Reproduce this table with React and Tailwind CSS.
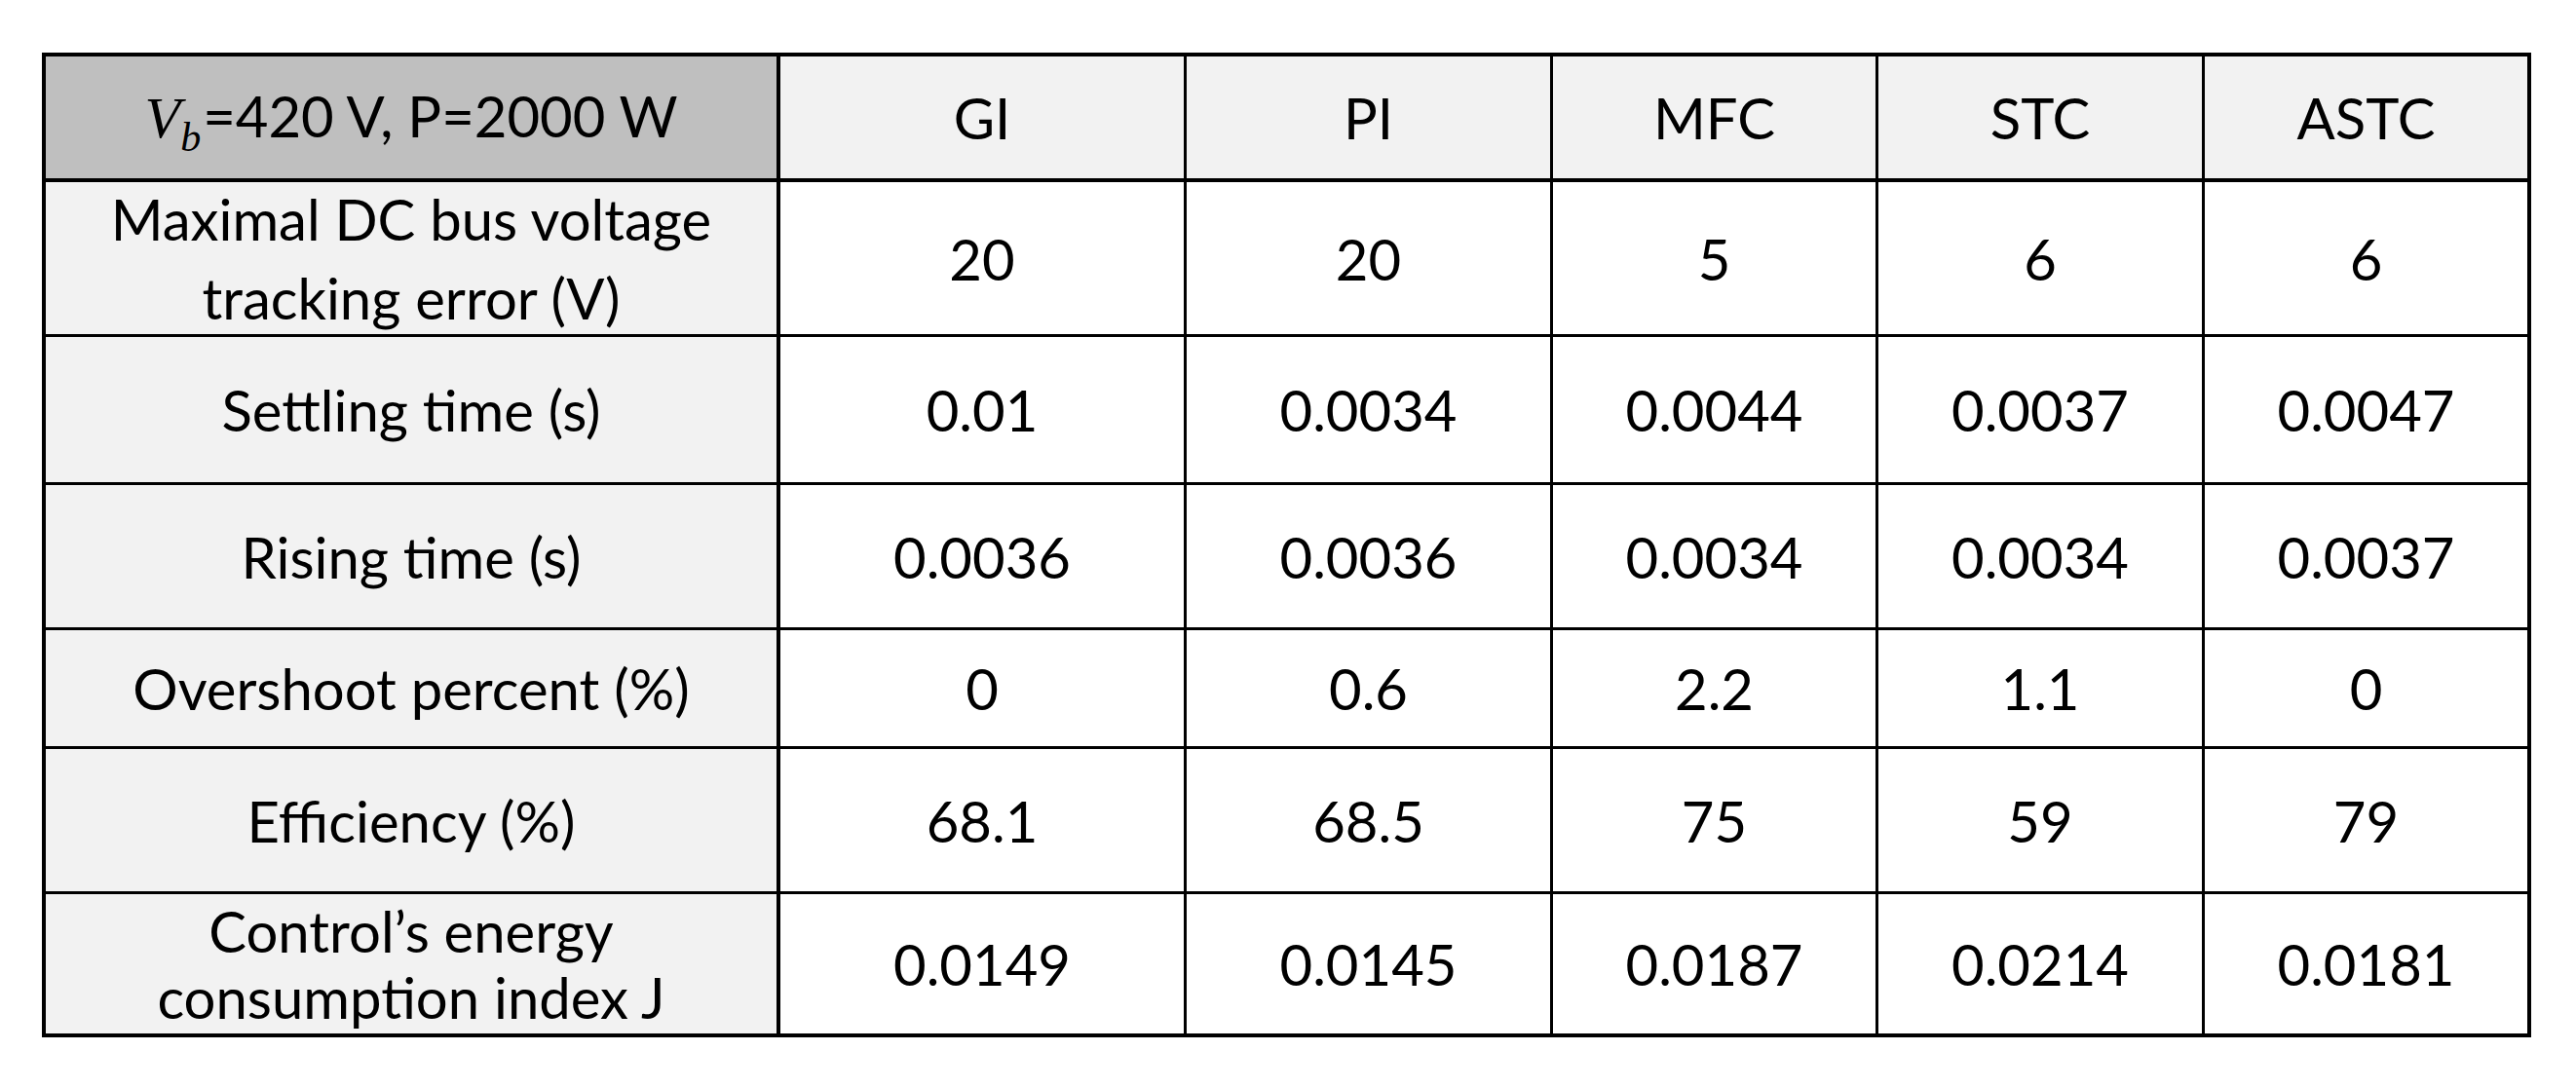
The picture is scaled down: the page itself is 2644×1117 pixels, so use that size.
const columns = ["GI", "PI", "MFC", "STC", "ASTC"];

const rows = [
  {
    label: ["Maximal DC bus voltage", "tracking error (V)"],
    leading: "leading-[81px]",
    values: ["20", "20", "5", "6", "6"],
  },
  { label: ["Settling time (s)"], values: ["0.01", "0.0034", "0.0044", "0.0037", "0.0047"] },
  { label: ["Rising time (s)"], values: ["0.0036", "0.0036", "0.0034", "0.0034", "0.0037"] },
  { label: ["Overshoot percent (%)"], values: ["0", "0.6", "2.2", "1.1", "0"] },
  { label: ["Efficiency (%)"], values: ["68.1", "68.5", "75", "59", "79"] },
  {
    label: ["Control’s energy", "consumption index J"],
    leading: "leading-[68px]",
    values: ["0.0149", "0.0145", "0.0187", "0.0214", "0.0181"],
  },
];

function Cell({ col, last, header, className = "", children }) {
  const right = col === 5 ? "" : col === 0 ? "border-r-4" : "border-r-[3px]";
  const bottom = last ? "" : header ? "border-b-4" : "border-b-[3px]";
  return (
    <div
      className={`flex flex-col items-center justify-center border-black text-center ${right} ${bottom} ${className}`}
    >
      {children}
    </div>
  );
}

export default function App() {
  return (
    <div className="h-[1117px] w-[2644px] bg-white pl-[43px] pt-[54px] font-['Lato',sans-serif] text-[58px] text-black">
      <div className="grid w-[2555px] grid-cols-[754px_417px_376px_334px_335px_331px] grid-rows-[129px_159px_152px_149px_122px_149px_143px] border-4 border-black">
        <Cell col={0} header className="bg-[#bfbfbf]">
          <div className="flex items-baseline">
            <span className="font-['Liberation_Serif',serif] text-[60px] italic">V</span>
            <span className="relative top-[14px] mr-[2px] font-['Liberation_Serif',serif] text-[42px] italic">
              b
            </span>
            <span>=420 V, P=2000 W</span>
          </div>
        </Cell>
        {columns.map((c, i) => (
          <Cell key={c} col={i + 1} header className="bg-[#f2f2f2]">
            {c}
          </Cell>
        ))}

        {rows.map((row, r) => {
          const last = r === rows.length - 1;
          return [
            <Cell key={`l${r}`} col={0} last={last} className={`bg-[#f2f2f2] ${row.leading || ""}`}>
              {row.label.map((line) => (
                <span key={line}>{line}</span>
              ))}
            </Cell>,
            ...row.values.map((v, i) => (
              <Cell key={`v${r}-${i}`} col={i + 1} last={last} className="bg-white">
                {v}
              </Cell>
            )),
          ];
        })}
      </div>
    </div>
  );
}
